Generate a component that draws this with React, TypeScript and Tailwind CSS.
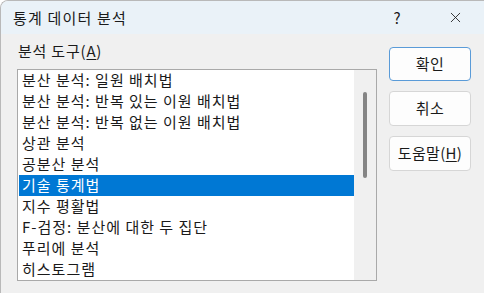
import { X } from "lucide-react";

const items = [
  "분산 분석: 일원 배치법",
  "분산 분석: 반복 있는 이원 배치법",
  "분산 분석: 반복 없는 이원 배치법",
  "상관 분석",
  "공분산 분석",
  "기술 통계법",
  "지수 평활법",
  "F-검정: 분산에 대한 두 집단",
  "푸리에 분석",
  "히스토그램",
];

const font = { fontFamily: '"Noto Sans CJK KR", "Noto Sans", sans-serif' };

export default function App() {
  const selected = 5;

  return (
    <div className="w-[484px] h-[293px] bg-white overflow-hidden" style={font}>
      <div className="w-[490px] h-[300px] rounded-tl-[8px] border-l border-t border-[#b9b9b9] bg-[#f0f0f0] overflow-hidden text-[#1a1a1a]">
        {/* title bar */}
        <div className="h-[33px] flex items-center bg-[#eaf2f8] pl-[12px]">
          <span className="text-[15px] leading-none tracking-[1.2px]">통계 데이터 분석</span>
          <span className="ml-auto w-[20px] text-center text-[15px] leading-none mr-[40px]">?</span>
          <X className="w-[17px] h-[17px] mr-[26px]" strokeWidth={1.2} />
        </div>

        <div className="flex pl-[16px] pt-[8px]">
          {/* left column */}
          <div className="w-[360px]">
            <div className="text-[15px] leading-[18px] h-[27px] pl-[1px] tracking-[0.8px]">
              분석 도구(<span className="underline underline-offset-2">A</span>)
            </div>
            <div className="flex h-[212px] border border-[#a9a9a9] bg-white">
              <ul className="flex-1 overflow-hidden pl-[1px]">
                {items.map((item, i) => (
                  <li
                    key={item}
                    className={
                      i === selected
                        ? "h-[21px] flex items-center pl-[3px] text-[15px] tracking-[1px] whitespace-nowrap bg-[#0078d4] text-white"
                        : "h-[21px] flex items-center pl-[3px] text-[15px] tracking-[1px] whitespace-nowrap"
                    }
                  >
                    {item}
                  </li>
                ))}
              </ul>
              <div className="w-[22px] bg-[#f0f0f0] pt-[22px] flex justify-center">
                <div className="w-[4px] h-[86px] rounded-full bg-[#858585]" />
              </div>
            </div>
          </div>

          {/* buttons */}
          <div className="ml-[12px] flex flex-col gap-[10px] mt-[5px]">
            <button className="w-[82px] h-[34px] rounded-[4px] border border-[#5a9bd8] bg-[#fdfdfd] text-[15px] tracking-[0.5px]">
              확인
            </button>
            <button className="w-[82px] h-[35px] rounded-[4px] border border-[#d6d6d6] bg-[#fdfdfd] text-[15px] tracking-[0.5px]">
              취소
            </button>
            <button className="w-[82px] h-[35px] rounded-[4px] border border-[#d6d6d6] bg-[#fdfdfd] text-[15px] tracking-[0.3px]">
              도움말(<span className="underline underline-offset-2">H</span>)
            </button>
          </div>
        </div>
      </div>
    </div>
  );
}
